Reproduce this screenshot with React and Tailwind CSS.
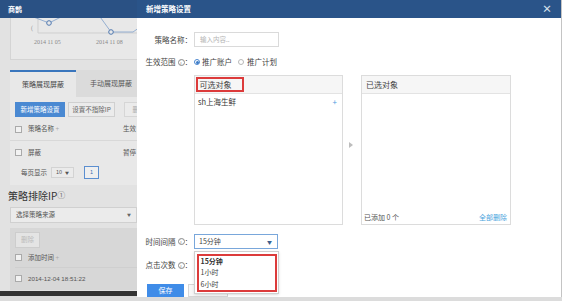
import React from "react";

function Info() {
  return (
    <span className="inline-flex items-center justify-center w-[7px] h-[7px] rounded-full border border-[#888] text-[5px] leading-none text-[#777] ml-[2px]">
      i
    </span>
  );
}

function Check() {
  return <span className="inline-block w-[7px] h-[7px] border border-[#aaa] bg-[#f2f2f2]" />;
}

function LeftPage() {
  return (
    <div className="w-[562px] h-[301px] flex flex-col bg-[#e2e2e2] text-[6.5px] text-[#555]">
      <div className="h-[18px] shrink-0 bg-[#2a5184] text-white flex items-center px-[8px] text-[7px] font-bold">
        商鹊
      </div>
      <div className="ml-[10px] w-[300px] h-[42px] shrink-0 bg-[#e8e8e8] border-l border-b border-[#d4d4d4]">
        <svg width="300" height="42" viewBox="0 0 300 42">
          <line x1="27" y1="0" x2="27" y2="15" stroke="#cfcfcf" strokeWidth="1" />
          <line x1="27" y1="15" x2="300" y2="15" stroke="#cfcfcf" strokeWidth="1" />
          <polyline
            points="20,-2 38,5 60,-6 87,-4 100,14 122,14 132,7 140,3"
            fill="none"
            stroke="#7f9fca"
            strokeWidth="0.8"
          />
          <circle cx="38" cy="5" r="2.3" fill="#e8e8e8" stroke="#4f78b0" strokeWidth="1" />
          <circle cx="100" cy="14" r="2.3" fill="#e8e8e8" stroke="#4f78b0" strokeWidth="1" />
          <text x="20" y="12" fontSize="6" fill="#999" fontFamily="Liberation Serif, serif">(</text>
          <text x="23" y="26" fontSize="6" fill="#888" fontFamily="Liberation Serif, serif">2014 11 05</text>
          <text x="85" y="26" fontSize="6" fill="#888" fontFamily="Liberation Serif, serif">2014 11 08</text>
        </svg>
      </div>
      <div className="ml-[10px] mt-[10px] flex h-[27px] shrink-0">
        <div className="w-[66px] border-t-2 border-[#3a76bd] bg-[#e8e8e8] flex items-center justify-center text-[7px] text-[#444]">
          策略展现屏蔽
        </div>
        <div className="w-[70px] bg-[#dbdbdb] flex items-center justify-center text-[7px] text-[#555]">
          手动展现屏蔽
        </div>
      </div>
      <div className="ml-[10px] w-[300px] h-[88px] shrink-0 bg-[#e8e8e8] flex flex-col">
        <div className="flex mt-[5px] ml-[5px] h-[15px] gap-[3px]">
          <div className="w-[50px] bg-[#4a89d2] text-white flex items-center justify-center">新增策略设置</div>
          <div className="w-[47px] bg-[#ebebeb] border border-[#d0d0d0] flex items-center justify-center text-[#666]">设置不指除IP</div>
          <div className="ml-[6px] w-[30px] bg-[#ebebeb] border border-[#d6d6d6] flex items-center justify-center text-[#aaa]">删除</div>
        </div>
        <div className="h-[23px] mt-[1px] flex items-center border-b border-[#d8d8d8] pl-[5px]">
          <Check />
          <span className="ml-[6px] w-[95px]">策略名称 <span className="text-[#aaa]">+</span></span>
          <span>生效</span>
        </div>
        <div className="h-[23px] flex items-center pl-[5px]">
          <Check />
          <span className="ml-[6px] w-[95px]">屏蔽</span>
          <span>暂停</span>
        </div>
        <div className="flex items-center h-[17px] pl-[11px]">
          <span>每页显示</span>
          <div className="ml-[4px] w-[23px] h-[11px] bg-[#ebebeb] border border-[#d3d3d3] flex items-center justify-center gap-[3px] text-[5.5px]">
            10 <span className="text-[4px]">▼</span>
          </div>
          <div className="ml-[10px] w-[15px] h-[13px] border border-[#5c8fd0] bg-[#efefef] flex items-center justify-center text-[5.5px] text-[#3a6cb0]">
            1
          </div>
        </div>
      </div>
      <div className="ml-[8px] mt-[3px] h-[14px] flex items-center text-[10px] text-[#333] shrink-0">
        策略排除IP<span className="text-[8px] text-[#777]">①</span>
      </div>
      <div className="ml-[10px] mt-[5px] w-[127px] h-[16px] shrink-0 bg-[#ebebeb] border border-[#d0d0d0] flex items-center justify-between px-[5px]">
        <span>选择策略来源</span>
        <span className="text-[4px] text-[#666]">▼</span>
      </div>
      <div className="ml-[10px] mt-[5px] w-[300px] h-[62px] shrink-0 bg-[#d7d7d7] flex flex-col pl-[5px]">
        <div className="mt-[4px] w-[25px] h-[16px] bg-[#e4e4e4] border border-[#cdcdcd] flex items-center justify-center text-[#bbb]">
          删除
        </div>
        <div className="h-[20px] flex items-center border-b border-[#cfcfcf]">
          <Check />
          <span className="ml-[6px]">添加时间 <span className="text-[#aaa]">+</span></span>
        </div>
        <div className="h-[21px] flex items-center">
          <Check />
          <span className="ml-[6px] font-['Liberation_Sans',sans-serif] text-[6.2px]">2014-12-04 18:51:22</span>
        </div>
      </div>
      <div className="h-[5px] mt-[1px] shrink-0 bg-[#343434]" />
      <div className="flex-1 bg-[#dcdcdc]" />
    </div>
  );
}

function Modal() {
  return (
    <div className="absolute left-[137px] top-0 w-[425px] h-[297px] bg-white border-r border-[#c4c4c4] flex flex-col text-[7.5px] text-[#444]">
      <div className="h-[18px] shrink-0 bg-[#2a5489] flex items-center justify-between pl-[9px] pr-[9px] text-white">
        <span className="font-bold text-[7.5px]">新增策略设置</span>
        <span className="text-[10px] leading-none text-[#d8e2ef] font-bold">×</span>
      </div>
      <div className="flex items-center mt-[14px] h-[15px]">
        <span className="w-[55px] text-right">策略名称：</span>
        <div className="ml-[2px] w-[85px] h-[15px] border border-[#dadada] flex items-center pl-[5px] text-[#b5b5b5] text-[6.5px]">
          输入内容..
        </div>
      </div>
      <div className="flex items-center mt-[8px] h-[14px]">
        <span className="w-[55px] text-right flex items-center justify-end">
          生效范围<Info /> ：
        </span>
        <span className="ml-[2px] w-[6px] h-[6px] rounded-full border border-[#4a86cf] flex items-center justify-center">
          <span className="w-[3px] h-[3px] rounded-full bg-[#3b7ac6]" />
        </span>
        <span className="ml-[2px]">推广账户</span>
        <span className="ml-[6px] w-[6px] h-[6px] rounded-full border border-[#b8b8b8]" />
        <span className="ml-[3px]">推广计划</span>
      </div>
      <div className="flex mt-[6px] ml-[57px]">
        <div className="w-[149px] h-[150px] border border-[#dcdcdc] flex flex-col">
          <div className="h-[18px] bg-[#f6f6f6] border-b border-[#e3e3e3] flex items-center pl-[0.5px]">
            <div className="w-[48px] h-[15px] border-2 border-solid border-[#dc3b3b] flex items-center pl-[2px] text-[8px]">
              可选对象
            </div>
          </div>
          <div className="flex items-center justify-between pl-[3px] pr-[5px] mt-[3px] h-[10px]">
            <span className="text-[#333]">sh上海生鲜</span>
            <span className="text-[#4d9de0] text-[8px]">+</span>
          </div>
        </div>
        <div className="w-[18px] flex items-center justify-center">
          <span className="w-0 h-0 border-y-[3px] border-y-transparent border-l-[4px] border-l-[#bdbdbd] ml-[-2px] mt-[-11px]" />
        </div>
        <div className="w-[150px] h-[150px] border border-[#dcdcdc] flex flex-col">
          <div className="h-[18px] bg-[#f6f6f6] border-b border-[#e3e3e3] flex items-center pl-[4px] text-[8px]">
            已选对象
          </div>
          <div className="flex-1" />
          <div className="flex items-center justify-between pl-[2px] pr-[3px] h-[10px] mb-[2px] text-[7px]">
            <span className="text-[#555]">已添加 0 个</span>
            <span className="text-[#4aa3dd]">全部删除</span>
          </div>
        </div>
      </div>
      <div className="flex items-center mt-[9px] h-[15px]">
        <span className="w-[55px] text-right flex items-center justify-end">
          时间间隔<Info /> ：
        </span>
        <div className="ml-[2px] w-[84px] h-[15px] border border-[#79a7db] flex items-center justify-between pl-[4px] pr-[5px] text-[7px]">
          <span>15分钟</span>
          <span className="text-[5px] text-[#3b5f8f]">▼</span>
        </div>
      </div>
      <div className="flex items-center mt-[9px] h-[14px]">
        <span className="w-[55px] text-right flex items-center justify-end">
          点击次数<Info /> ：
        </span>
      </div>
      <div className="flex mt-[12px] ml-[10px] h-[13px]">
        <div className="w-[37px] bg-[#3f8ce8] text-white flex items-center justify-center text-[7px]">保存</div>
        <div className="ml-[4px] w-[40px] border border-[#d6d6d6] bg-[#f7f7f7]" />
      </div>
      <div className="absolute left-[57px] top-[251px] w-[85px] h-[43px] bg-white border border-[#cfcfcf] shadow-sm p-[1.5px]">
        <div className="w-full h-full border-2 border-solid border-[#dc3b3b] flex flex-col pl-[2px] text-[7px]">
          <div className="h-[13px] flex items-center font-bold text-[#333]">15分钟</div>
          <div className="h-[13px] flex items-center">1小时</div>
          <div className="h-[13px] flex items-center">6小时</div>
        </div>
      </div>
    </div>
  );
}

export default function App() {
  return (
    <div className="relative w-[562px] h-[301px] overflow-hidden font-['Noto_Sans_CJK_SC','Noto_Sans',sans-serif]">
      <LeftPage />
      <Modal />
    </div>
  );
}
